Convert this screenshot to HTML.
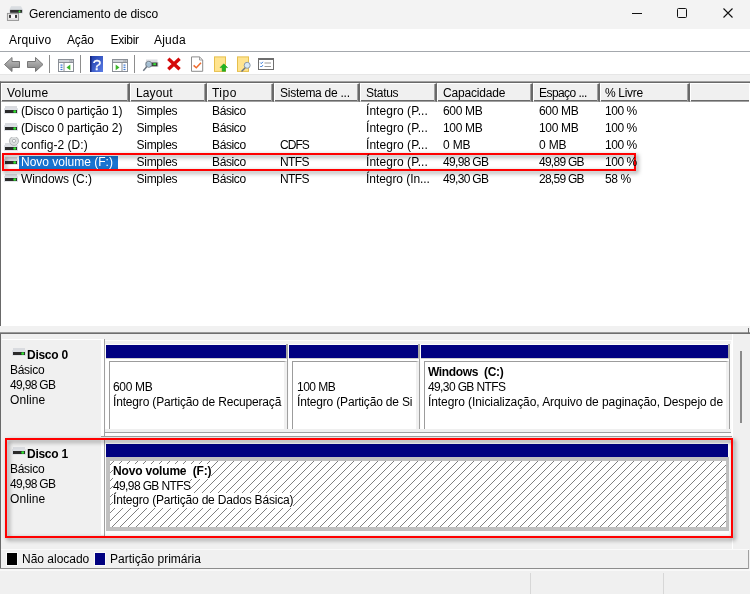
<!DOCTYPE html>
<html lang="pt-BR">
<head>
<meta charset="utf-8">
<title>Gerenciamento de disco</title>
<style>
*{margin:0;padding:0;box-sizing:border-box}
html,body{width:750px;height:594px;overflow:hidden;background:#f0f0f0}
body{position:relative;font-family:"Liberation Sans",sans-serif;font-size:12px;color:#000;line-height:17px}
.a{position:absolute}
.t{position:absolute;white-space:pre;height:15px;line-height:15px;margin-top:1px}
.b{font-weight:700}
#title{left:0;top:0;width:750px;height:29px;background:#f3f3f3}
#menu{left:0;top:29px;width:750px;height:22px;background:#fff}
#menuline{left:0;top:51px;width:750px;height:1px;background:#a4a8ad}
#tool{left:0;top:52px;width:750px;height:22px;background:#fff}
#list{left:0;top:81px;width:750px;height:245px;background:#fff;border-top:1px solid #a0a0a0;border-left:1px solid #696969;box-shadow:inset 0 1px 0 #696969}
.hd{position:absolute;top:83px;height:19px;background:#f0f0f0;border-top:1px solid #fff;border-left:1px solid #fff;border-right:2px solid #696969;border-bottom:1px solid #a0a0a0;box-shadow:inset 0 -1px 0 #696969}
.hd:after{content:"";position:absolute;right:0;top:0;bottom:0;width:1px;background:#a0a0a0}
.hl:after{display:none}
.bar{position:absolute;height:13px;background:#000080}
.pt{position:absolute;background:#fff;border-right:1px solid #a0a0a0;border-top:1px solid #cfcfcf}
.pt i{position:absolute;left:3px;top:2px;right:0;bottom:0;border-left:1px solid #9c9c9c;border-top:1px solid #9c9c9c;border-right:3px solid #f0f0f0}
.lbl{position:absolute;left:2px;width:99px;height:97px;background:#f0f0f0}
.gl{position:absolute;background:#a0a0a0}
.red{position:absolute;border:2px solid #f00;filter:drop-shadow(2px 2px 2px rgba(0,0,0,.5))}
</style>
</head>
<body>
<!-- TITLE BAR -->
<div class="a" id="title"></div>
<svg class="a" style="left:0;top:0" width="750" height="29" viewBox="0 0 750 29">
<!-- app icon -->
<path d="M11 6.200 H21 L23 10 V13.500 H9.300 V10 Z" fill="#d9dde1"/>
<rect x="10.100" y="9.900" width="12" height="2.900" fill="#2e2e2e"/><circle cx="19.500" cy="11.400" r="1" fill="#3be03b"/>
<rect x="7.400" y="13.400" width="11.200" height="7" fill="#e4e4e4" stroke="#8f8f8f" stroke-width=".9"/>
<rect x="11" y="15" width="4" height="3" fill="#fafafa"/>
<rect x="9" y="14.900" width="2" height="3" fill="#3a3a3a"/><rect x="15" y="14.900" width="2" height="3" fill="#3a3a3a"/>
<!-- window controls -->
<rect x="632" y="13" width="10" height="1" fill="#111"/>
<rect x="677.500" y="8.500" width="9" height="9" rx="1" fill="none" stroke="#111" stroke-width="1"/>
<path d="M723.500 8.500 L732.500 17.500 M732.500 8.500 L723.500 17.500" stroke="#111" stroke-width="1.100"/>
</svg>
<!-- MENU + TOOLBAR -->
<div class="a" id="menu"></div>
<div class="a" id="menuline"></div>
<div class="a" id="tool"></div>
<svg class="a" style="left:0;top:52px;will-change:transform" width="300" height="22" viewBox="0 52 300 22">
<defs>
<linearGradient id="ga" x1="0" y1="0" x2="0" y2="1"><stop offset="0" stop-color="#c4c4c4"/><stop offset="1" stop-color="#7c7c7c"/></linearGradient>
<linearGradient id="gh" x1="0" y1="0" x2="1" y2="1"><stop offset="0" stop-color="#1c3aa8"/><stop offset="1" stop-color="#5b7de6"/></linearGradient>
<symbol id="hdd" viewBox="0 0 16 17"><rect x="1" y="3" width="12" height="3" fill="#d9dbdf"/><rect x="0" y="5.200" width="14" height="5.600" fill="#dcdfe4"/><rect x="1" y="7" width="12" height="3" fill="#2b2b2b"/><rect x="9.300" y="7.300" width="2.800" height="2.400" rx="1" fill="#2fe32f"/></symbol>
<symbol id="cd" viewBox="0 0 16 17"><rect x="1" y="6" width="12" height="3" fill="#d9dbdf"/><rect x="0" y="8.200" width="14" height="5.600" fill="#dcdfe4"/><rect x="1" y="10" width="12" height="3" fill="#2b2b2b"/><rect x="9.300" y="10.300" width="2.800" height="2.400" rx="1" fill="#2fe32f"/><circle cx="10" cy="3.900" r="4.500" fill="#dcdedf" stroke="#b2b5b7" stroke-width="1"/><circle cx="10" cy="3.900" r="1.600" fill="#fff" stroke="#a6a9ab" stroke-width=".9"/></symbol>
</defs>
<!-- back / forward arrows -->
<path d="M4.5 64.5 L12 57.5 V61.5 H19.5 V67.5 H12 V71.5 Z" fill="url(#ga)" stroke="#777" stroke-width="1"/>
<path d="M43 64.5 L35.5 57.5 V61.5 H27.5 V67.5 H35.5 V71.5 Z" fill="url(#ga)" stroke="#777" stroke-width="1"/>
<rect x="49" y="55" width="1" height="18" fill="#8d8d8d"/>
<!-- show/hide console tree -->
<rect x="58.5" y="59.5" width="15" height="12" fill="#fff" stroke="#8a8f96"/><rect x="59" y="60" width="14" height="2.500" fill="#cfd3d8"/><rect x="59" y="62" width="14" height="1" fill="#8a8f96"/><rect x="69.500" y="60.500" width="1" height="1" fill="#6f757d"/><rect x="71.300" y="60.500" width="1" height="1" fill="#6f757d"/><rect x="63.5" y="62.5" width="1" height="9" fill="#8a8f96"/>
<rect x="60.5" y="64.5" width="2" height="1.2" fill="#3b78d8"/><rect x="60.5" y="66.7" width="2" height="1.2" fill="#3b78d8"/><rect x="60.5" y="68.9" width="2" height="1.2" fill="#3b78d8"/>
<path d="M70.300 64.500 V70.300 L66.500 67.400 Z" fill="#3cb52a"/>
<rect x="80" y="55" width="1" height="18" fill="#8d8d8d"/>
<!-- help -->
<rect x="90" y="56" width="13" height="16" fill="url(#gh)"/><rect x="90" y="56" width="1.500" height="16" fill="#16267a"/>
<text x="96.900" y="69.700" font-family="Liberation Sans, sans-serif" font-weight="400" font-size="15" fill="#fff" stroke="#fff" stroke-width=".350" text-anchor="middle">?</text>
<!-- action pane -->
<rect x="112.500" y="59.5" width="15" height="12" fill="#fff" stroke="#8a8f96"/><rect x="113" y="60" width="14" height="2.500" fill="#cfd3d8"/><rect x="113" y="62" width="14" height="1" fill="#8a8f96"/><rect x="123.500" y="60.500" width="1" height="1" fill="#6f757d"/><rect x="125.300" y="60.500" width="1" height="1" fill="#6f757d"/><rect x="121.500" y="62.5" width="1" height="9" fill="#8a8f96"/>
<rect x="123.500" y="64.5" width="2" height="1.2" fill="#3b78d8"/><rect x="123.500" y="66.7" width="2" height="1.2" fill="#3b78d8"/><rect x="123.500" y="68.9" width="2" height="1.2" fill="#3b78d8"/>
<path d="M115.700 64.500 V70.300 L119.500 67.400 Z" fill="#3cb52a"/>
<rect x="134" y="55" width="1" height="18" fill="#8d8d8d"/>
<!-- rescan -->
<rect x="146" y="59.500" width="11.500" height="3" fill="#d9dbdf"/><rect x="145" y="62" width="13.500" height="5" fill="#dcdfe4"/><rect x="146" y="62.500" width="11.500" height="3.800" fill="#3a3a3a"/><rect x="153.300" y="63.200" width="2.600" height="2" fill="#35e035"/>
<circle cx="148.800" cy="64.300" r="3" fill="#b9d7ee" fill-opacity=".85" stroke="#76818c" stroke-width="1"/><path d="M146.700 66.700 L143.300 70.800" stroke="#6a7480" stroke-width="1.400"/>
<!-- red X -->
<path d="M168.300 58.800 L179.600 69.200 M179.600 58.800 L168.300 69.200" stroke="#d40a0a" stroke-width="3.400" stroke-linecap="butt"/>
<!-- properties doc with check -->
<path d="M191.500 56.900 H199.500 L202.700 60 V71.300 H191.500 Z" fill="#fff" stroke="#8c8c8c"/><path d="M199.500 57 V60 H202.600" fill="none" stroke="#8c8c8c" stroke-width=".8"/>
<path d="M193.600 65.400 L196.300 67.800 L201 62.800" fill="none" stroke="#ee6a2c" stroke-width="1.500"/>
<!-- folder up -->
<rect x="214.500" y="56.900" width="11" height="14.500" fill="#ffe48f" stroke="#e6bf4c"/>
<path d="M223.800 63.800 L227.600 67.600 H225.500 V71.300 H222.100 V67.600 H220 Z" fill="#22b422" stroke="#1c9a1c" stroke-width=".5"/>
<!-- folder find -->
<rect x="237.500" y="56.900" width="11" height="14.500" fill="#ffe48f" stroke="#e6bf4c"/>
<circle cx="247.200" cy="65.300" r="3" fill="#d6e8f6" stroke="#8d99a5" stroke-width="1"/><path d="M245.200 67.700 L241.500 71.600" stroke="#6a7480" stroke-width="1.400"/>
<!-- list options -->
<rect x="258.500" y="58.500" width="15" height="11" fill="#fff" stroke="#6e6e6e"/><rect x="258" y="58" width="16" height="2" fill="#6e6e6e"/>
<path d="M260.300 62.600 l1 1 l1.600 -1.800 M260.300 66 l1 1 l1.600 -1.800" fill="none" stroke="#2d72d2" stroke-width="1"/>
<rect x="264.500" y="62.500" width="6.500" height="1" fill="#9a9a9a"/><rect x="264.500" y="66" width="6.500" height="1" fill="#9a9a9a"/>
</svg>

<!-- LIST VIEW -->
<div class="a" id="list"></div>
<div class="hd" style="left:1px;width:129px"></div>
<div class="hd" style="left:130px;width:77px"></div>
<div class="hd" style="left:207px;width:67px"></div>
<div class="hd" style="left:274px;width:86px"></div>
<div class="hd" style="left:360px;width:77px"></div>
<div class="hd" style="left:437px;width:96px"></div>
<div class="hd" style="left:533px;width:67px"></div>
<div class="hd" style="left:600px;width:90px"></div>
<div class="hd hl" style="left:690px;width:59px;border-right:0"></div>
<div class="a" style="left:0;top:74px;width:750px;height:1px;background:#e6e6e6"></div>
<div class="a" style="left:19px;top:156px;width:99px;height:14px;background:#1874d1"></div>
<svg class="a" style="left:4px;top:103px" width="16" height="17"><use href="#hdd"/></svg>
<svg class="a" style="left:4px;top:120px" width="16" height="17"><use href="#hdd"/></svg>
<svg class="a" style="left:4px;top:137px" width="16" height="17"><use href="#cd"/></svg>
<svg class="a" style="left:4px;top:154px" width="16" height="17"><use href="#hdd"/></svg>
<svg class="a" style="left:4px;top:171px" width="16" height="17"><use href="#hdd"/></svg>
<!-- SPLITTER -->
<div class="a" style="left:0;top:326px;width:750px;height:6px;background:#f1f1f1"></div>
<div class="a" style="left:0;top:332px;width:750px;height:1px;background:#9a9a9a"></div>
<div class="a" style="left:0;top:333px;width:750px;height:1px;background:#6e6e6e"></div>
<div class="a" style="left:748px;top:328px;width:1px;height:5px;background:#6e6e6e"></div>
<!-- LOWER PANE -->
<div class="a" style="left:0;top:334px;width:1px;height:235px;background:#696969"></div>
<div class="a" style="left:105px;top:340px;width:627px;height:97px;background:#fcfcfc"></div>
<div class="a" style="left:105px;top:341px;width:626px;height:3px;background:#f0f0f0"></div>
<div class="a" style="left:105px;top:429px;width:626px;height:3px;background:#efefef"></div>
<div class="a" style="left:2px;top:339px;width:102px;height:1px;background:#fff"></div>
<div class="a" style="left:105px;top:439px;width:627px;height:97px;background:#fcfcfc"></div>
<div class="a" style="left:105px;top:440px;width:626px;height:3px;background:#f0f0f0"></div>
<div class="a" style="left:732px;top:334px;width:1px;height:215px;background:#fff"></div>
<!-- disk 0 -->
<div class="lbl" style="top:340px"></div>
<div class="a" style="left:101px;top:340px;width:3px;height:96px;background:#fff"></div>
<div class="gl" style="left:104px;top:339px;width:1px;height:98px"></div>
<div class="gl" style="left:104px;top:432px;width:627px;height:1px"></div>
<div class="gl" style="left:101px;top:436px;width:631px;height:1px"></div>
<svg class="a" style="left:12px;top:345px" width="16" height="17"><use href="#hdd"/></svg>
<div class="bar" style="left:106px;top:345px;width:180px"></div>
<div class="pt" style="left:106px;top:358px;width:182px;height:71px"><i></i></div>
<div class="bar" style="left:289px;top:345px;width:129px"></div>
<div class="pt" style="left:289px;top:358px;width:131px;height:71px"><i></i></div>
<div class="bar" style="left:421px;top:345px;width:307px"></div>
<div class="pt" style="left:421px;top:358px;width:309px;height:71px"><i></i></div>
<div class="gl" style="left:286px;top:344px;width:2px;height:14px;background:#a8a8a4"></div>
<div class="gl" style="left:418px;top:344px;width:2px;height:14px;background:#a8a8a4"></div>
<div class="gl" style="left:728px;top:344px;width:2px;height:14px;background:#a8a8a4"></div>
<!-- disk 1 -->
<div class="lbl" style="top:439px"></div>
<div class="a" style="left:101px;top:439px;width:3px;height:96px;background:#fff"></div>
<div class="gl" style="left:104px;top:438px;width:1px;height:98px"></div>
<svg class="a" style="left:12px;top:444px" width="16" height="17"><use href="#hdd"/></svg>
<div class="bar" style="left:106px;top:444px;width:622px"></div>
<svg class="a" style="left:106px;top:457px" width="623" height="74" viewBox="0 0 623 74" shape-rendering="crispEdges">
<defs><pattern id="hat" width="8" height="8" patternUnits="userSpaceOnUse" x="3" y="1">
<rect width="8" height="8" fill="#fff"/>
<rect x="0" y="7" width="1" height="1" fill="#808080"/><rect x="1" y="6" width="1" height="1" fill="#808080"/><rect x="2" y="5" width="1" height="1" fill="#808080"/><rect x="3" y="4" width="1" height="1" fill="#808080"/><rect x="4" y="3" width="1" height="1" fill="#808080"/><rect x="5" y="2" width="1" height="1" fill="#808080"/><rect x="6" y="1" width="1" height="1" fill="#808080"/><rect x="7" y="0" width="1" height="1" fill="#808080"/>
</pattern></defs>
<rect x="0" y="0" width="623" height="74" fill="#c0c0c0"/>
<rect x="4" y="4" width="616" height="66" fill="url(#hat)"/>
</svg>
<!-- scrollbar thumb -->
<div class="a" style="left:740px;top:351px;width:2px;height:72px;background:#8b8b8b"></div>
<!-- legend -->
<div class="a" style="left:1px;top:549px;width:748px;height:1px;background:#fafafa"></div>
<div class="a" style="left:7px;top:553px;width:10px;height:12px;background:#000;box-shadow:0 0 0 1px #fbfbfb"></div>
<div class="a" style="left:95px;top:553px;width:10px;height:12px;background:#000080;box-shadow:0 0 0 1px #fbfbfb"></div>
<div class="a" style="left:0;top:568px;width:749px;height:1px;background:#8c8c8c"></div>
<div class="a" style="left:0;top:569px;width:750px;height:2px;background:#f8f8f8"></div>
<div class="a" style="left:748px;top:550px;width:1px;height:19px;background:#a0a0a0"></div>
<!-- status bar -->
<div class="a" style="left:530px;top:573px;width:1px;height:21px;background:#d7d7d7"></div>
<div class="a" style="left:663px;top:573px;width:1px;height:21px;background:#d7d7d7"></div>
<!-- red annotation rectangles -->
<div class="red" style="left:2px;top:153px;width:634px;height:18px"></div>
<div class="red" style="left:5px;top:438px;width:728px;height:100px"></div>
<div class="a" id="tx" style="left:0;top:0;width:750px;height:594px;will-change:transform">
<div class="t" style="left:29px;top:6px;letter-spacing:-0.04px">Gerenciamento de disco</div>
<div class="t" style="left:9px;top:32px;letter-spacing:0.23px">Arquivo</div>
<div class="t" style="left:67px;top:32px;letter-spacing:-0.14px">Ação</div>
<div class="t" style="left:110.5px;top:32px;letter-spacing:-0.29px">Exibir</div>
<div class="t" style="left:154px;top:32px;letter-spacing:0.22px">Ajuda</div>
<div class="t" style="left:7px;top:85px;letter-spacing:0.21px">Volume</div>
<div class="t" style="left:136px;top:85px;letter-spacing:0.13px">Layout</div>
<div class="t" style="left:212px;top:85px;letter-spacing:0.47px">Tipo</div>
<div class="t" style="left:280px;top:85px;letter-spacing:-0.26px">Sistema de ...</div>
<div class="t" style="left:366px;top:85px;letter-spacing:-0.29px">Status</div>
<div class="t" style="left:443px;top:85px;letter-spacing:-0.18px">Capacidade</div>
<div class="t" style="left:539px;top:85px;letter-spacing:-0.56px">Espaço ...</div>
<div class="t" style="left:605px;top:85px;letter-spacing:-0.32px">% Livre</div>
<div class="t" style="left:21px;top:103px;letter-spacing:-0.14px">(Disco 0 partição 1)</div>
<div class="t" style="left:136.5px;top:103px;letter-spacing:-0.27px">Simples</div>
<div class="t" style="left:212px;top:103px;letter-spacing:-0.37px">Básico</div>
<div class="t" style="left:366px;top:103px;letter-spacing:0.05px">Íntegro (P...</div>
<div class="t" style="left:443px;top:103px;letter-spacing:-0.34px">600 MB</div>
<div class="t" style="left:539px;top:103px;letter-spacing:-0.34px">600 MB</div>
<div class="t" style="left:605px;top:103px;letter-spacing:-0.45px">100 %</div>
<div class="t" style="left:21px;top:120px;letter-spacing:-0.14px">(Disco 0 partição 2)</div>
<div class="t" style="left:136.5px;top:120px;letter-spacing:-0.27px">Simples</div>
<div class="t" style="left:212px;top:120px;letter-spacing:-0.37px">Básico</div>
<div class="t" style="left:366px;top:120px;letter-spacing:0.05px">Íntegro (P...</div>
<div class="t" style="left:443px;top:120px;letter-spacing:-0.34px">100 MB</div>
<div class="t" style="left:539px;top:120px;letter-spacing:-0.34px">100 MB</div>
<div class="t" style="left:605px;top:120px;letter-spacing:-0.45px">100 %</div>
<div class="t" style="left:21px;top:137px;letter-spacing:0.06px">config-2 (D:)</div>
<div class="t" style="left:136.5px;top:137px;letter-spacing:-0.27px">Simples</div>
<div class="t" style="left:212px;top:137px;letter-spacing:-0.37px">Básico</div>
<div class="t" style="left:280px;top:137px;letter-spacing:-0.97px">CDFS</div>
<div class="t" style="left:366px;top:137px;letter-spacing:0.05px">Íntegro (P...</div>
<div class="t" style="left:443px;top:137px;letter-spacing:-0.18px">0 MB</div>
<div class="t" style="left:539px;top:137px;letter-spacing:-0.18px">0 MB</div>
<div class="t" style="left:605px;top:137px;letter-spacing:-0.45px">100 %</div>
<div class="t" style="left:21px;top:154px;letter-spacing:-0.01px;color:#fff">Novo volume (F:)</div>
<div class="t" style="left:136.5px;top:154px;letter-spacing:-0.27px">Simples</div>
<div class="t" style="left:212px;top:154px;letter-spacing:-0.37px">Básico</div>
<div class="t" style="left:280px;top:154px;letter-spacing:-0.64px">NTFS</div>
<div class="t" style="left:366px;top:154px;letter-spacing:0.05px">Íntegro (P...</div>
<div class="t" style="left:443px;top:154px;letter-spacing:-0.68px">49,98 GB</div>
<div class="t" style="left:539px;top:154px;letter-spacing:-0.74px">49,89 GB</div>
<div class="t" style="left:605px;top:154px;letter-spacing:-0.45px">100 %</div>
<div class="t" style="left:21px;top:171px;letter-spacing:-0.1px">Windows (C:)</div>
<div class="t" style="left:136.5px;top:171px;letter-spacing:-0.27px">Simples</div>
<div class="t" style="left:212px;top:171px;letter-spacing:-0.37px">Básico</div>
<div class="t" style="left:280px;top:171px;letter-spacing:-0.64px">NTFS</div>
<div class="t" style="left:366px;top:171px;letter-spacing:-0.06px">Íntegro (In...</div>
<div class="t" style="left:443px;top:171px;letter-spacing:-0.68px">49,30 GB</div>
<div class="t" style="left:539px;top:171px;letter-spacing:-0.74px">28,59 GB</div>
<div class="t" style="left:605px;top:171px;letter-spacing:-0.39px">58 %</div>
<div class="t b" style="left:27px;top:347px;letter-spacing:-0.27px">Disco 0</div>
<div class="t" style="left:10px;top:362px;letter-spacing:-0.29px">Básico</div>
<div class="t" style="left:10px;top:377px;letter-spacing:-0.68px">49,98 GB</div>
<div class="t" style="left:10px;top:392px;letter-spacing:0.1px">Online</div>
<div class="t b" style="left:27px;top:446px;letter-spacing:-0.27px">Disco 1</div>
<div class="t" style="left:10px;top:461px;letter-spacing:-0.29px">Básico</div>
<div class="t" style="left:10px;top:476px;letter-spacing:-0.68px">49,98 GB</div>
<div class="t" style="left:10px;top:491px;letter-spacing:0.1px">Online</div>
<div class="t" style="left:113px;top:379px;letter-spacing:-0.34px">600 MB</div>
<div class="t" style="left:113px;top:394px;letter-spacing:-0.17px">Íntegro (Partição de Recuperaçã</div>
<div class="t" style="left:297px;top:379px;letter-spacing:-0.51px">100 MB</div>
<div class="t" style="left:297px;top:394px;letter-spacing:-0.18px">Íntegro (Partição de Si</div>
<div class="t b" style="left:428px;top:364px;letter-spacing:-0.35px">Windows  (C:)</div>
<div class="t" style="left:428px;top:379px;letter-spacing:-0.62px">49,30 GB NTFS</div>
<div class="t" style="left:428px;top:394px;letter-spacing:-0.08px">Íntegro (Inicialização, Arquivo de paginação, Despejo de</div>
<div class="t b" style="left:113px;top:463px;letter-spacing:-0.18px;background:#fff">Novo volume  (F:)</div>
<div class="t" style="left:113px;top:478px;letter-spacing:-0.62px;background:#fff">49,98 GB NTFS</div>
<div class="t" style="left:113px;top:492px;letter-spacing:-0.19px;background:#fff">Íntegro (Partição de Dados Básica)</div>
<div class="t" style="left:22px;top:551px;letter-spacing:-0.01px">Não alocado</div>
<div class="t" style="left:110px;top:551px;letter-spacing:0.01px">Partição primária</div>
</div>
</body>
</html>
